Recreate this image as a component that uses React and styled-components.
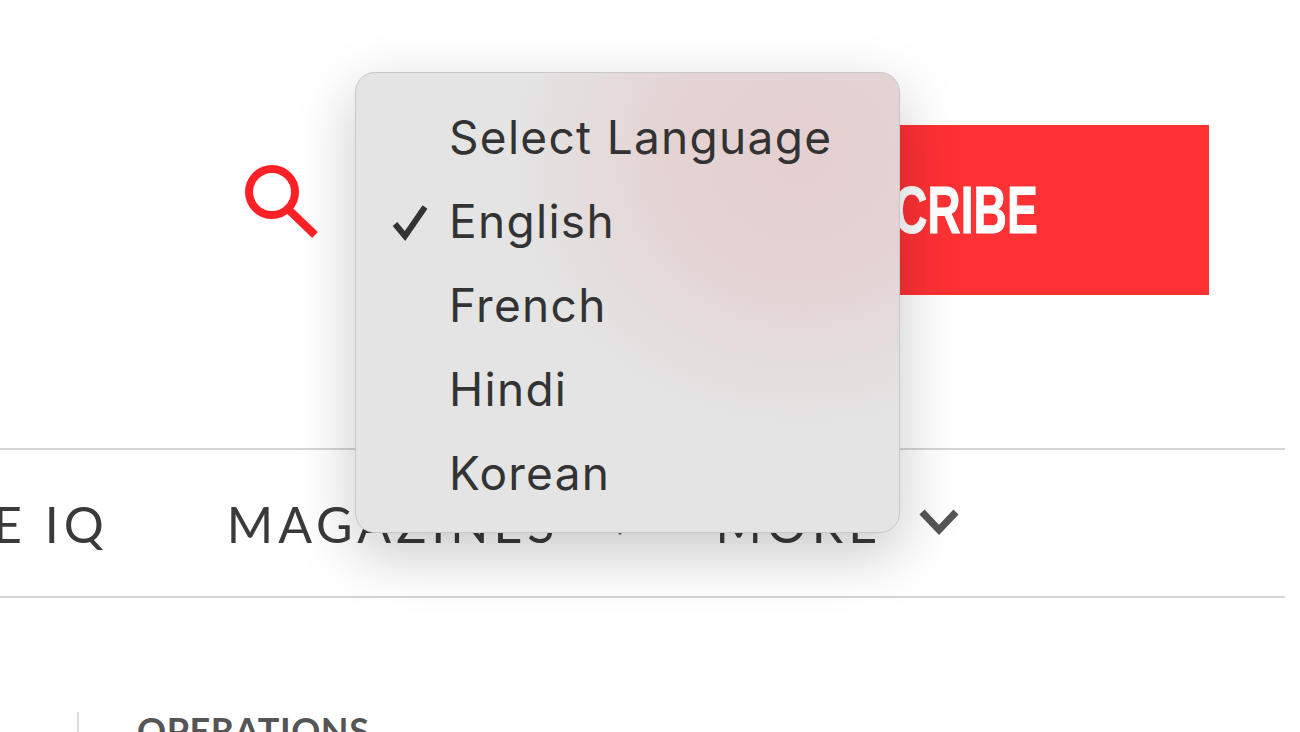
import React from 'react'
import styled, { createGlobalStyle } from 'styled-components'

const LANGUAGES = ['Select Language', 'English', 'French', 'Hindi', 'Korean']
const SELECTED = 'English'

const GlobalStyle = createGlobalStyle`
  html, body {
    margin: 0;
    padding: 0;
    background: #fff;
    overflow: hidden;
  }
  body {
    font-family: "Lato", "Open Sans", sans-serif;
  }
`

const Page = styled.div`
  position: relative;
  width: 1300px;
  height: 732px;
  overflow: hidden;
  background: #fff;
`

const TopBar = styled.header`
  display: flex;
  justify-content: space-between;
  align-items: center;
  height: 448px;
  padding: 0 91px 28px 241px;
  box-sizing: border-box;
`

const SearchButton = styled.span`
  display: flex;
  margin-bottom: 16px;
`

const Subscribe = styled.a`
  display: flex;
  align-items: center;
  justify-content: flex-end;
  width: 400px;
  height: 170px;
  padding-right: 171px;
  box-sizing: border-box;
  background: #fe3134;
  color: #fff;
`

const SubscribeText = styled.span`
  font-family: "Liberation Sans", sans-serif;
  font-size: 66px;
  font-weight: 700;
  line-height: 1;
  white-space: nowrap;
  -webkit-text-stroke: 1px #fff;
  transform: scaleX(0.7);
  transform-origin: right center;
`

const Nav = styled.nav`
  display: flex;
  align-items: center;
  width: 1285px;
  height: 150px;
  box-sizing: border-box;
  border-top: 2px solid #d6d6d6;
  border-bottom: 2px solid #d6d6d6;
  color: #3a3a3a;
  font-size: 50px;
  letter-spacing: 5px;
  white-space: nowrap;
`

const NavItem = styled.span`
  margin-left: ${p => p.$gap}px;
  margin-top: 2px;
`

const Caret = styled.svg`
  margin-left: ${p => p.$gap}px;
  margin-top: -2px;
  flex: none;
`

const Section = styled.div`
  display: flex;
  padding: 114px 0 0 77px;
`

const SectionLabel = styled.span`
  border-left: 2px solid #dcdcdc;
  padding-left: 58px;
  color: #555;
  font-size: 36px;
  font-weight: 700;
  letter-spacing: 0.6px;
  line-height: 36px;
  white-space: nowrap;
`

const Menu = styled.ul`
  position: absolute;
  left: 355px;
  top: 72px;
  width: 545px;
  height: 461px;
  margin: 0;
  padding: 22px 0 0;
  box-sizing: border-box;
  list-style: none;
  border: 1px solid #c8c8c8;
  border-radius: 20px;
  background:
    radial-gradient(ellipse 290px 270px at 82% 18%, #e4d0d0 0%, #e5d2d2 42%, rgba(228, 228, 228, 0) 100%),
    #e4e4e4;
  box-shadow: 0 20px 60px rgba(0, 0, 0, 0.22);
  font-family: "Inter", "Liberation Sans", sans-serif;
  font-size: 46px;
  letter-spacing: 1.3px;
  color: #333;
`

const Option = styled.li`
  position: relative;
  height: 84px;
  line-height: 84px;
  padding-left: 93px;
`

const Tick = styled.svg`
  position: absolute;
  left: 36px;
  top: 24px;
`

const SearchIcon = () => (
  <svg width="80" height="76" viewBox="0 0 80 76" fill="none" stroke="#fe2027" strokeWidth="8">
    <circle cx="31" cy="28" r="23" />
    <path d="M47 45 L74 71" />
  </svg>
)

const NavCaret = ({ gap }) => (
  <Caret $gap={gap} width="40" height="28" viewBox="0 0 40 28" fill="none" stroke="#555" strokeWidth="7">
    <path d="M3 4 L20 22 L37 4" />
  </Caret>
)

const App = () => (
  <Page>
    <GlobalStyle />
    <TopBar>
      <SearchButton><SearchIcon /></SearchButton>
      <Subscribe><SubscribeText>SUBSCRIBE</SubscribeText></Subscribe>
    </TopBar>
    <Nav>
      <NavItem $gap={-7}>E IQ</NavItem>
      <NavItem $gap={118}>MAGAZINES</NavItem>
      <NavCaret gap={41} />
      <NavItem $gap={75}>MORE</NavItem>
      <NavCaret gap={37} />
    </Nav>
    <Section>
      <SectionLabel>OPERATIONS</SectionLabel>
    </Section>
    <Menu>
      {LANGUAGES.map(lang => (
        <Option key={lang}>
          {lang === SELECTED && (
            <Tick width="38" height="38" viewBox="0 0 38 38" fill="none" stroke="#333" strokeWidth="6">
              <path d="M3 21 L13 33 L33 4" />
            </Tick>
          )}
          {lang}
        </Option>
      ))}
    </Menu>
  </Page>
)

export default App
